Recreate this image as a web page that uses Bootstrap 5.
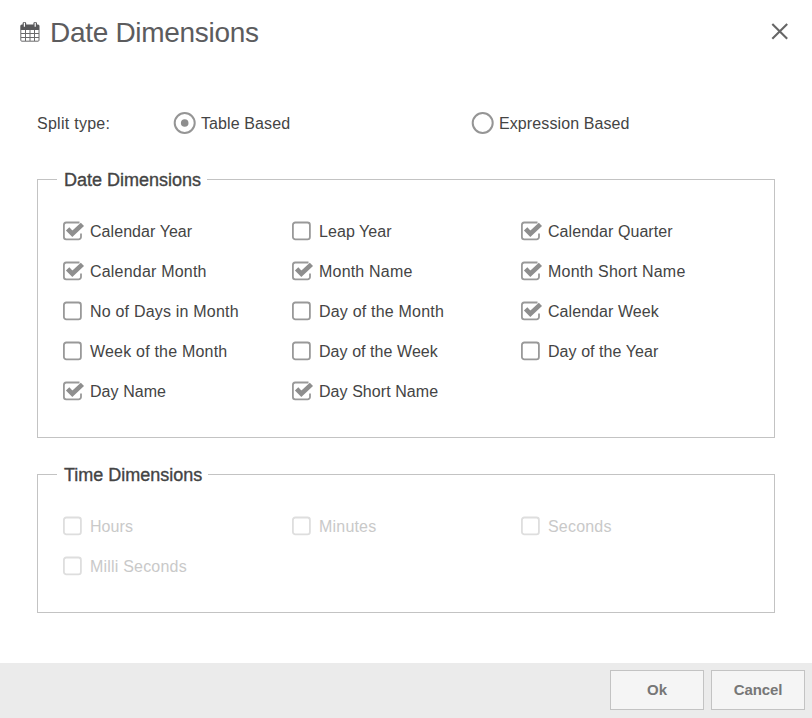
<!DOCTYPE html>
<html lang="en">
<head>
<meta charset="utf-8">
<meta name="viewport" content="width=device-width, initial-scale=1">
<title>Date Dimensions</title>
<link rel="stylesheet" href="https://cdn.jsdelivr.net/npm/bootstrap@5.3.0/dist/css/bootstrap.min.css">
<style>
body{font-family:"Liberation Sans",Arial,sans-serif;font-size:16px;color:#444;line-height:20px}
.dialog{height:718px;overflow:hidden}
.dialog-head{height:64px;padding:0 21px 0 20px}
.dialog-head h1{font-size:28px;line-height:32px;font-weight:400;letter-spacing:-.3px;color:#5c5c5e;margin:2px 0 0 10px}
.dialog-main{padding:47px 37px 0}
.split{height:25px}
.split-label{width:136px;letter-spacing:.27px}
.split-opt{width:298px;gap:4px;letter-spacing:.1px}
.group{border:1px solid #c3c3c3;padding:0 0 0 19px;margin:0;min-width:0}
.group legend{float:none;width:auto;font-size:18px;line-height:22px;padding:1px 6px 0 7px;margin:0;color:#444;-webkit-text-stroke:.35px #444}
.group-date{height:270px;margin-top:32px}
.group-time{height:150px;margin-top:25px}
.opts{display:grid;grid-template-columns:229px 229px 229px;grid-auto-rows:40px;padding:21px 0 0 6px;letter-spacing:.06px}
.opt{gap:5px}
.opt svg{flex:none;margin-bottom:2px}
.wide{letter-spacing:.2px}
.off{color:#c9c9c9}
.dialog-foot{height:55px;background:#ebebeb;padding:7px 7px 8px;gap:7px}
.dlg-btn{width:94px;height:40px;border:1px solid #c3c3c3;border-radius:0;background:#f5f5f5;color:#777;font-size:15px;font-weight:700;letter-spacing:-.1px;padding:0}
</style>
<script src="https://cdn.jsdelivr.net/npm/bootstrap@5.3.0/dist/js/bootstrap.bundle.min.js"></script>
</head>
<body>
<svg width="0" height="0" class="position-absolute" aria-hidden="true">
<symbol id="on" viewBox="0 0 22 20"><path d="M16.5 1.5H3.2A2.4 2.4 0 0 0 .9 3.9v12a2.4 2.4 0 0 0 2.3 2.4h12.4a2.4 2.4 0 0 0 2.4-2.4V12.5" fill="none" stroke="#999" stroke-width="1.8"/><path d="M4.6 7.8l4.8 5L19.4 3.4" fill="none" stroke="#8e8e8e" stroke-width="4.7"/></symbol>
<symbol id="no" viewBox="0 0 22 20"><rect x=".9" y="1.5" width="17" height="16.8" rx="2.4" fill="none" stroke="#999" stroke-width="1.8"/></symbol>
<symbol id="dis" viewBox="0 0 22 20"><rect x=".9" y="1.5" width="17" height="16.8" rx="2.4" fill="none" stroke="#dedede" stroke-width="1.8"/></symbol>
</svg>
<div class="dialog d-flex flex-column bg-white">
<header class="dialog-head d-flex align-items-center">
<svg width="20" height="20" viewBox="0 0 20 20"><path d="M.8 8V18.2a1 1 0 0 0 1 1H18a1 1 0 0 0 1-1V8M5.5 8v11M10 8v11M14.5 8v11M1 11.5h18M1 15.5h18" fill="none" stroke="#6a6a6c" stroke-width="1"/><path d="M.3 8V4a1.5 1.5 0 0 1 1.5-1.5H2.6V1.2a1.8 1.2 0 0 1 3.6 0v1.3h7.2V1.2a1.8 1.2 0 0 1 3.6 0v1.3h1A1.5 1.5 0 0 1 19.5 4v4z" fill="#58585a"/><path d="M4.4 .8v4M15.2 .8v4" stroke="#fff" stroke-width="1.2"/></svg>
<h1>Date Dimensions</h1>
<svg class="ms-auto" width="22" height="22" viewBox="0 0 22 22"><path d="M3.3 3L18.2 17.7M18.2 3L3.3 17.7" stroke="#666" stroke-width="2.1"/></svg>
</header>
<main class="dialog-main flex-grow-1">
<div class="split d-flex align-items-center">
<span class="split-label">Split type:</span>
<span class="split-opt d-flex align-items-center"><svg width="24" height="24"><circle cx="11.7" cy="11" r="10" fill="none" stroke="#959595" stroke-width="2"/><circle cx="11.7" cy="11" r="3.8" fill="#8e8e8e"/></svg><span>Table Based</span></span>
<span class="split-opt d-flex align-items-center"><svg width="24" height="24"><circle cx="11.7" cy="11" r="10" fill="none" stroke="#959595" stroke-width="2"/></svg><span>Expression Based</span></span>
</div>
<fieldset class="group group-date"><legend>Date Dimensions</legend>
<div class="opts">
<label class="opt d-flex align-items-center"><svg width="22" height="20"><use href="#on"/></svg><span>Calendar Year</span></label>
<label class="opt d-flex align-items-center"><svg width="22" height="20"><use href="#no"/></svg><span>Leap Year</span></label>
<label class="opt d-flex align-items-center"><svg width="22" height="20"><use href="#on"/></svg><span>Calendar Quarter</span></label>
<label class="opt wide d-flex align-items-center"><svg width="22" height="20"><use href="#on"/></svg><span>Calendar Month</span></label>
<label class="opt wide d-flex align-items-center"><svg width="22" height="20"><use href="#on"/></svg><span>Month Name</span></label>
<label class="opt wide d-flex align-items-center"><svg width="22" height="20"><use href="#on"/></svg><span>Month Short Name</span></label>
<label class="opt wide d-flex align-items-center"><svg width="22" height="20"><use href="#no"/></svg><span>No of Days in Month</span></label>
<label class="opt wide d-flex align-items-center"><svg width="22" height="20"><use href="#no"/></svg><span>Day of the Month</span></label>
<label class="opt d-flex align-items-center"><svg width="22" height="20"><use href="#on"/></svg><span>Calendar Week</span></label>
<label class="opt wide d-flex align-items-center"><svg width="22" height="20"><use href="#no"/></svg><span>Week of the Month</span></label>
<label class="opt d-flex align-items-center"><svg width="22" height="20"><use href="#no"/></svg><span>Day of the Week</span></label>
<label class="opt d-flex align-items-center"><svg width="22" height="20"><use href="#no"/></svg><span>Day of the Year</span></label>
<label class="opt d-flex align-items-center"><svg width="22" height="20"><use href="#on"/></svg><span>Day Name</span></label>
<label class="opt d-flex align-items-center"><svg width="22" height="20"><use href="#on"/></svg><span>Day Short Name</span></label>
</div></fieldset>
<fieldset class="group group-time"><legend>Time Dimensions</legend>
<div class="opts off">
<label class="opt d-flex align-items-center"><svg width="22" height="20"><use href="#dis"/></svg><span>Hours</span></label>
<label class="opt wide d-flex align-items-center"><svg width="22" height="20"><use href="#dis"/></svg><span>Minutes</span></label>
<label class="opt wide d-flex align-items-center"><svg width="22" height="20"><use href="#dis"/></svg><span>Seconds</span></label>
<label class="opt wide d-flex align-items-center"><svg width="22" height="20"><use href="#dis"/></svg><span>Milli Seconds</span></label>
</div></fieldset>
</main>
<footer class="dialog-foot d-flex justify-content-end">
<button type="button" class="btn dlg-btn">Ok</button>
<button type="button" class="btn dlg-btn">Cancel</button>
</footer>
</div>
</body>
</html>
